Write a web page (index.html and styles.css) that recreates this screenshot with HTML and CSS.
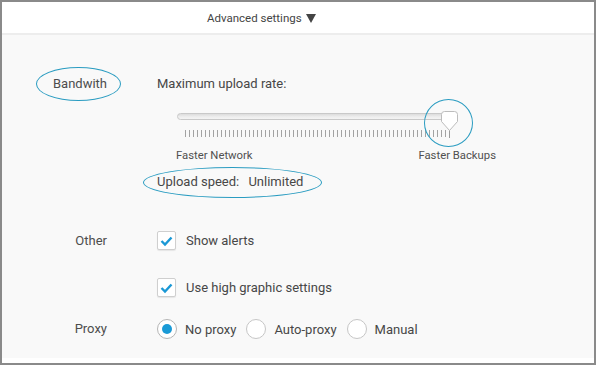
FILE: index.html
```html
<!DOCTYPE html>
<html lang="en">
<head>
  <meta charset="UTF-8">
  <meta name="viewport" content="width=device-width, initial-scale=1.0">
  <title>Advanced settings</title>
  <link rel="stylesheet" href="styles.css">
</head>
<body>
  <div class="window">
    <div class="header">
      <span class="toggle">Advanced settings <span class="caret"></span></span>
    </div>

    <div class="content">
      <!-- Bandwidth -->
      <div class="row row-bandwidth">
        <div class="label"><span class="mark mark-bandwidth">Bandwith</span></div>
        <div class="field">
          <div class="field-title">Maximum upload rate:</div>
          <div class="slider">
            <div class="track"></div>
            <div class="ticks"></div>
            <svg class="thumb" width="17" height="28" viewBox="0 0 17 28">
              <line x1="8.5" y1="18" x2="8.5" y2="27" stroke="#9c9c9c" stroke-width="1"/>
              <path d="M3.5 0.5 H13.5 A3 3 0 0 1 16.5 3.5 V10.5 L8.5 19.5 L0.5 10.5 V3.5 A3 3 0 0 1 3.5 0.5 Z" fill="#fff" stroke="#bcbcbc" stroke-width="1"/>
            </svg>
            <span class="mark-circle"></span>
          </div>
          <div class="scale">
            <span>Faster Network</span>
            <span>Faster Backups</span>
          </div>
          <div class="speed">
            <span class="mark mark-speed">Upload speed: <span class="speed-value">Unlimited</span></span>
          </div>
        </div>
      </div>

      <!-- Other -->
      <div class="row row-other">
        <div class="label">Other</div>
        <div class="field options">
          <label class="option">
            <span class="checkbox">
              <svg width="17" height="17" viewBox="0 0 17 17"><polyline points="3.5,9 7,12.5 13.5,5.5" fill="none" stroke="#1a98d5" stroke-width="2.4"/></svg>
            </span>
            Show alerts
          </label>
          <label class="option">
            <span class="checkbox">
              <svg width="17" height="17" viewBox="0 0 17 17"><polyline points="3.5,9 7,12.5 13.5,5.5" fill="none" stroke="#1a98d5" stroke-width="2.4"/></svg>
            </span>
            Use high graphic settings
          </label>
        </div>
      </div>

      <!-- Proxy -->
      <div class="row row-proxy">
        <div class="label">Proxy</div>
        <div class="field radios">
          <label class="radio-option"><span class="radio checked"></span>No proxy</label>
          <label class="radio-option"><span class="radio"></span>Auto-proxy</label>
          <label class="radio-option"><span class="radio"></span>Manual</label>
        </div>
      </div>
    </div>

    <div class="bottom-strip"></div>
  </div>
</body>
</html>
```

FILE: styles.css
```css
/* Base styles */
* {
  margin: 0;
  padding: 0;
  box-sizing: border-box;
}

body {
  font-family: Roboto, "Liberation Sans", sans-serif;
  font-size: 13px;
  color: #474747;
  background: #fff;
}

/* Window frame */
.window {
  width: 596px;
  height: 365px;
  border: 2px solid #8a8a8a;
  background: #fff;
}

/* Header */
.header {
  height: 33px;
  border-bottom: 2px solid #ededed;
  padding: 8px 0 0 205px;
}

.toggle {
  font-size: 11.5px;
  line-height: 16px;
  color: #444;
}

.caret {
  display: inline-block;
  width: 0;
  height: 0;
  border-left: 5px solid transparent;
  border-right: 5px solid transparent;
  border-top: 9px solid #444;
  margin-left: 1px;
  vertical-align: -1px;
}

/* Content */
.content {
  background: #f9f9f9;
  padding: 41px 0 19px;
}

.row {
  display: grid;
  grid-template-columns: 105px 1fr;
  column-gap: 50px;
}

.label {
  text-align: right;
  line-height: 16px;
  color: #4d4d4d;
}

.field-title {
  line-height: 16px;
}

/* Annotation ellipses */
.mark {
  position: relative;
  display: inline-block;
}

.mark::before {
  content: "";
  position: absolute;
  border: 1px solid #2a9cc1;
  border-radius: 50%;
}

.mark-bandwidth::before {
  left: -17px;
  right: -14px;
  top: -9px;
  bottom: -9px;
}

.mark-speed::before {
  left: -14px;
  right: -19px;
  top: -7px;
  bottom: -8px;
}

/* Slider */
.slider {
  position: relative;
  padding-top: 21px;
}

.track {
  margin-left: 20px;
  width: 275px;
  height: 7px;
  border: 1px solid #c9c9c9;
  border-radius: 4px;
  background: linear-gradient(#dcdcdc, #efefef 60%, #f4f4f4);
}

.ticks {
  margin: 10px 0 0 28px;
  width: 261px;
  height: 7px;
  background: repeating-linear-gradient(to right, #a3a3a3 0 1px, transparent 1px 4px);
}

.thumb {
  position: absolute;
  left: 284px;
  top: 19px;
}

.mark-circle {
  position: absolute;
  left: 267px;
  top: 7px;
  width: 49px;
  height: 48px;
  border: 1px solid #2a9cc1;
  border-radius: 50%;
}

.scale {
  display: flex;
  justify-content: space-between;
  width: 320px;
  margin: 12px 0 0 19px;
  font-size: 11.3px;
  line-height: 14px;
  color: #505050;
}

.speed {
  margin-top: 11px;
  line-height: 16px;
}

.speed-value {
  margin-left: 6px;
}

/* Checkboxes */
.row-other {
  margin-top: 41px;
}

.row-other .label {
  line-height: 19px;
}

.options {
  display: flex;
  flex-direction: column;
  gap: 28px;
}

.option {
  display: flex;
  align-items: center;
  gap: 10px;
  height: 19px;
}

.checkbox {
  width: 19px;
  height: 19px;
  border: 1px solid #cfcfcf;
  border-radius: 2px;
  background: #fff;
  box-shadow: 0 1px 1px rgba(0, 0, 0, 0.08);
  display: flex;
}

/* Radios */
.row-proxy {
  margin-top: 22px;
}

.row-proxy .label {
  line-height: 20px;
}

.radios {
  display: flex;
  gap: 10px;
}

.radio-option {
  display: flex;
  align-items: center;
  gap: 8px;
  height: 20px;
}

.radio {
  width: 20px;
  height: 20px;
  border: 1px solid #c6c6c6;
  border-radius: 50%;
  background: #fff;
  display: flex;
  align-items: center;
  justify-content: center;
}

.radio.checked {
  border-color: #b5b5b5;
}

.radio.checked::after {
  content: "";
  width: 10px;
  height: 10px;
  border-radius: 50%;
  background: #1a9ad6;
}

.bottom-strip {
  height: 5px;
  background: #fff;
}
```
